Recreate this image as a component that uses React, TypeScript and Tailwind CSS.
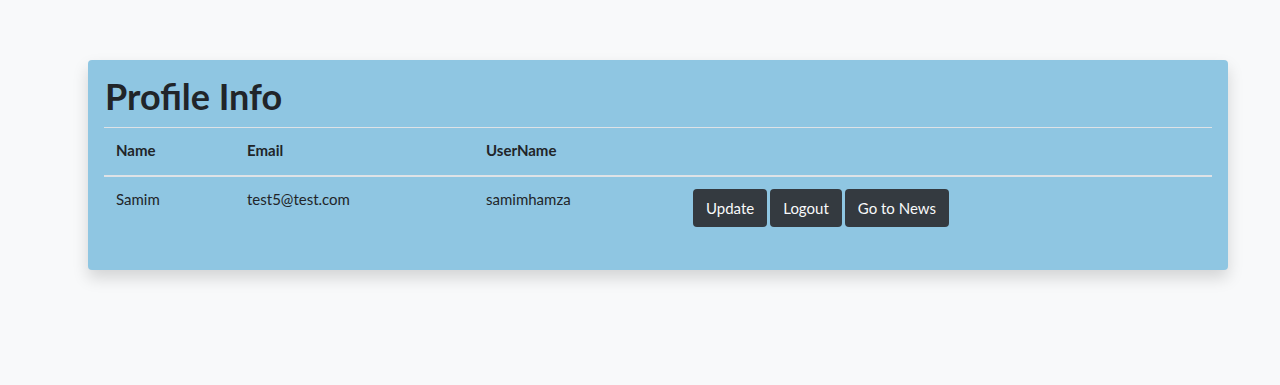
const font = { fontFamily: 'Lato, "Noto Sans", sans-serif' };

export default function App() {
  return (
    <div className="min-h-[385px] bg-[#f8f9fa] pt-[60px] px-[88px]" style={font}>
      <div className="w-[1140px] rounded bg-[#8fc6e2] p-4 shadow-[0_8px_16px_rgba(0,0,0,0.15)] text-[#212529]">
        <h1 className="text-[36px] font-bold leading-[40px] mb-[11px] pl-px">Profile Info</h1>
        <table className="w-full border-collapse mb-[15px] text-[15px]">
          <thead>
            <tr className="border-t border-[#dee2e6] border-b-2">
              <th className="w-[131px] px-3 pt-[10px] pb-[13px] text-left font-bold leading-6">Name</th>
              <th className="w-[239px] px-3 pt-[10px] pb-[13px] text-left font-bold leading-6">Email</th>
              <th className="w-[207px] px-3 pt-[10px] pb-[13px] text-left font-bold leading-6">UserName</th>
              <th className="px-3 pt-[10px] pb-[13px]"></th>
            </tr>
          </thead>
          <tbody>
            <tr>
              <td className="px-3 pt-[10px] align-top leading-6">Samim</td>
              <td className="px-3 pt-[10px] align-top leading-6">test5@test.com</td>
              <td className="px-3 pt-[10px] align-top leading-6">samimhamza</td>
              <td className="px-3 py-3 align-top">
                <div className="flex gap-[3px]">
                  <button className="h-[38px] rounded bg-[#343a40] px-[13px] text-[15px] text-[#f8f9fa]">Update</button>
                  <button className="h-[38px] rounded bg-[#343a40] px-[13px] text-[15px] text-[#f8f9fa]">Logout</button>
                  <button className="h-[38px] rounded bg-[#343a40] px-[13px] text-[15px] text-[#f8f9fa]">Go to News</button>
                </div>
              </td>
            </tr>
          </tbody>
        </table>
      </div>
    </div>
  );
}
